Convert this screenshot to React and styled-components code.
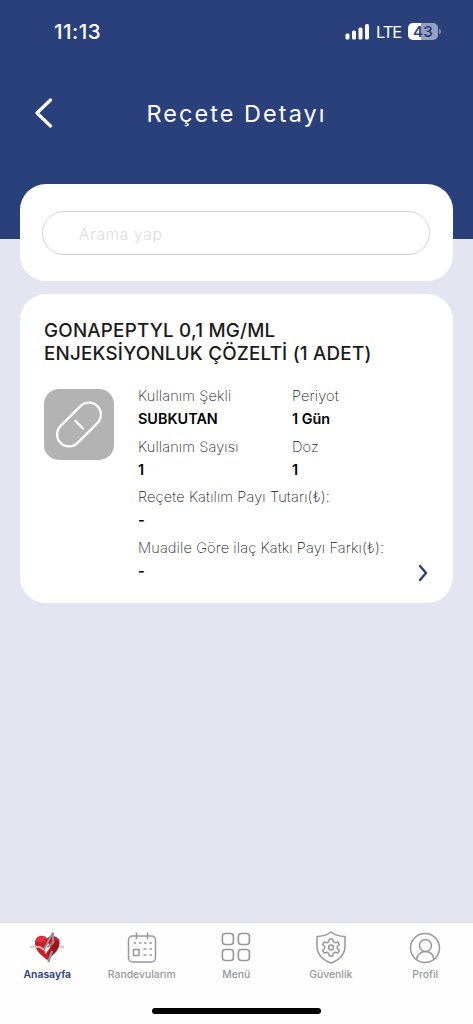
import styled, { createGlobalStyle } from "styled-components"

const colors = {
    primary: '#2a407a',
    background: '#e3e6f0',
    card: '#ffffff',
    muted: '#96979f',
    border: '#d3d3d5',
}

const GlobalStyle = createGlobalStyle`
    * {
        box-sizing: border-box;
    }

    body {
        margin: 0;
        font-family: Inter, "Liberation Sans", sans-serif;
        background: ${colors.background};
    }
`

const Screen = styled.div`
    display: flex;
    flex-direction: column;
    width: 473px;
    height: 1024px;
    background: ${colors.background};
    overflow: hidden;
`

const Header = styled.header`
    flex: none;
    height: 239px;
    background: ${colors.primary};
    color: #fff;
`

const StatusBar = styled.div`
    display: flex;
    align-items: center;
    justify-content: space-between;
    height: 63px;
    padding: 0 32px 0 54px;
`

const Clock = styled.span`
    font-size: 20.5px;
    font-weight: 500;
    letter-spacing: 0.5px;
`

const StatusIcons = styled.div`
    display: flex;
    align-items: center;
`

const Network = styled.span`
    margin: 1px 7px 0 7px;
    font-size: 16.5px;
    line-height: 18px;
    letter-spacing: -1.1px;
`

const Battery = styled.div`
    display: flex;
    align-items: center;
    justify-content: center;
    width: 30px;
    height: 17px;
    border-radius: 5px;
    background: linear-gradient(90deg, #fff 43%, #95a0c0 43%);
    color: ${colors.primary};
    font-size: 15px;
    font-weight: 600;
    letter-spacing: 0.2px;
`

const BatteryCap = styled.span`
    width: 2px;
    height: 5px;
    margin-left: 1px;
    border-radius: 0 2px 2px 0;
    background: #7c89ae;
`

const TitleBar = styled.div`
    display: grid;
    grid-template-columns: 71px 1fr 71px;
    align-items: center;
    height: 101px;
`

const BackButton = styled.button`
    display: flex;
    padding: 0 0 2px 34px;
    border: 0;
    background: none;
    color: inherit;
`

const Title = styled.h1`
    margin: 0;
    text-align: center;
    font-size: 23.4px;
    font-weight: 400;
    letter-spacing: 2.1px;
    white-space: nowrap;
`

const Content = styled.main`
    display: flex;
    flex: 1;
    flex-direction: column;
    gap: 13px;
    margin-top: -55px;
    padding: 0 20px;
`

const SearchCard = styled.section`
    height: 97px;
    padding: 27px 23px 0 22px;
    border-radius: 26px;
    background: ${colors.card};
`

const SearchInput = styled.input`
    width: 100%;
    height: 44px;
    padding: 2px 36px 0;
    border: 1px solid ${colors.border};
    border-radius: 22px;
    outline: none;
    background: none;
    font-family: inherit;
    font-size: 15.5px;
    font-weight: 300;
    letter-spacing: 0.7px;

    &::placeholder {
        color: #dcdcde;
    }
`

const DrugCard = styled.section`
    display: flex;
    flex-direction: column;
    height: 309px;
    padding: 25px 24px 0;
    border-radius: 26px;
    background: ${colors.card};
`

const DrugName = styled.h2`
    margin: 0;
    color: #1b1b1b;
    font-size: 18.8px;
    font-weight: 500;
    line-height: 23px;
    letter-spacing: 0.22px;
    white-space: nowrap;
`

const DrugBody = styled.div`
    display: flex;
    margin-top: 18px;
`

const PillBox = styled.div`
    flex: none;
    width: 70px;
    height: 71px;
    margin: 6px 24px 0 0;
    border-radius: 15px;
    background: #b3b3b3;
`

const Fields = styled.dl`
    display: grid;
    grid-template-columns: 154px 1fr;
    flex: 1;
    margin: 0;
`

const Field = styled.div`
    grid-column: ${({ $wide }) => ($wide ? '1 / -1' : 'auto')};
    height: 50.6px;
    white-space: nowrap;
`

const FieldLabel = styled.dt`
    padding-top: 1px;
    color: #222;
    font-size: 14.6px;
    font-weight: 200;
    line-height: 24px;
    letter-spacing: 0.12px;
`

const FieldValue = styled.dd`
    margin: -1px 0 0;
    color: #000;
    font-size: 14.4px;
    font-weight: 600;
    line-height: 24px;
`

const DetailArrow = styled.svg`
    align-self: flex-end;
    margin: -21px 1px 0 0;
`

const TabBar = styled.nav`
    display: grid;
    grid-template-columns: repeat(5, 94.5px);
    flex: none;
    height: 86px;
    padding-top: 8px;
    border-top: 1px solid #dddfe5;
    background: #fefefe;
`

const Tab = styled.a`
    display: flex;
    flex-direction: column;
    align-items: center;
    color: ${({ $active }) => ($active ? colors.primary : colors.muted)};
    font-size: 10.4px;
    font-weight: ${({ $active }) => ($active ? 600 : 500)};
    line-height: 14px;

    svg {
        margin-bottom: 3px;
    }
`

const HomeArea = styled.div`
    display: flex;
    flex: none;
    justify-content: center;
    height: 16px;
    background: #fefefe;
`

const HomeIndicator = styled.div`
    width: 169px;
    height: 6px;
    border-radius: 3px;
    background: #000;
`

const fields = [
    { label: 'Kullanım Şekli', value: 'SUBKUTAN' },
    { label: 'Periyot', value: '1 Gün' },
    { label: 'Kullanım Sayısı', value: '1' },
    { label: 'Doz', value: '1' },
    { label: 'Reçete Katılım Payı Tutarı(₺):', value: '-', wide: true },
    { label: 'Muadile Göre ilaç Katkı Payı Farkı(₺):', value: '-', wide: true },
]

function HeartIcon() {
    return (
        <svg width="34" height="34" viewBox="0 0 34 34" fill="none">
            <path d="M17 29C12 24.500 5 20 5 12.500C5 4 14 3 17 7.500C20 3.500 29.500 4 29.500 12.500C29.500 19.500 22 25 17 29Z" fill="#c91d27" />
            <path d="M24 12L29 8C31 15 25 22 18 28.500V22Z" fill="#a5121c" />
            <path d="M5.500 10C8 4 14 4 16.500 7.500L12 12Z" fill="#e0323a" />
            <path d="M14 18L18 12L20.500 16L15.500 23Z" fill="#f4efec" />
            <path d="M5 14.500L6.500 16H10L13 18.500L15 17" stroke="#e8d9c8" strokeWidth="1.600" />
            <path d="M0 16H3L4.500 15L6 16M29.500 15L31 16H34" stroke="#9a9c9f" />
            <path d="M14 18.500L22.500 2" stroke="#909396" strokeWidth="1.800" />
            <path d="M23 1.500V12L17.500 16" stroke="#909396" strokeWidth="2" />
            <path d="M18.300 31L22 20" stroke="#909396" strokeWidth="2.400" />
        </svg>
    )
}

function CalendarIcon() {
    return (
        <svg width="34" height="34" viewBox="0 0 34 34" fill="none" stroke="currentColor" strokeWidth="1.5">
            <rect x="3.500" y="5" width="27" height="26" rx="4" />
            <path d="M11.500 1.500V8M22.500 1.500V8" />
            <path d="M8.500 12H11M14 12H16.500M19 12H21.500M24.500 12H27M18.500 18H21.500M24.500 18H27M18.500 24H21.500M24.500 24H27" />
            <rect x="8.500" y="18.500" width="5.500" height="6" />
        </svg>
    )
}

function MenuIcon() {
    return (
        <svg width="34" height="34" viewBox="0 0 34 34" fill="none" stroke="currentColor" strokeWidth="1.6">
            <rect x="3.400" y="2.500" width="11" height="11" rx="3" />
            <rect x="19.400" y="2.500" width="11" height="11" rx="3" />
            <rect x="3.400" y="18.500" width="11" height="11" rx="3" />
            <rect x="19.400" y="18.500" width="11" height="11" rx="3" />
        </svg>
    )
}

function ShieldIcon() {
    return (
        <svg width="34" height="34" viewBox="0 0 34 34" fill="none" stroke="currentColor" strokeWidth="1.500" strokeLinejoin="round">
            <path d="M17 1C13 4 8 5.500 3 5.500V15C3 23 9 29 17 32C25 29 31 23 31 15V5.500C26 5.500 21 4 17 1Z" />
            <g transform="translate(17 16.500)">
                <path d="M-1.600 -8.500H1.600L2.200 -5.800L4.200 -4.700L6.700 -5.600L8.300 -2.800L6.300 -1V1L8.300 2.800L6.700 5.600L4.200 4.700L2.200 5.800L1.600 8.500H-1.600L-2.200 5.800L-4.200 4.700L-6.700 5.600L-8.300 2.800L-6.300 1V-1L-8.300 -2.800L-6.700 -5.600L-4.200 -4.700L-2.200 -5.800Z" />
                <circle r="2.400" />
            </g>
        </svg>
    )
}

function ProfileIcon() {
    return (
        <svg width="34" height="34" viewBox="0 0 34 34" fill="none" stroke="currentColor" strokeWidth="1.500">
            <circle cx="17" cy="17" r="14.500" />
            <circle cx="17.500" cy="14.500" r="6" />
            <path d="M8.500 28.500C9.500 23.500 13 20.500 17.500 20.500C22 20.500 25 23.500 26 28" />
        </svg>
    )
}

const tabs = [
    { label: 'Anasayfa', Icon: HeartIcon, active: true },
    { label: 'Randevularım', Icon: CalendarIcon },
    { label: 'Menü', Icon: MenuIcon },
    { label: 'Güvenlik', Icon: ShieldIcon },
    { label: 'Profil', Icon: ProfileIcon },
]

function App() {
    return (
        <Screen>
            <GlobalStyle />
            <Header>
                <StatusBar>
                    <Clock>11:13</Clock>
                    <StatusIcons>
                        <svg width="24" height="16" viewBox="0 0 24 16" fill="#fff">
                            <rect x="0.500" y="9.500" width="4" height="6" rx="1.500" />
                            <rect x="7" y="6.500" width="4" height="9" rx="1.500" />
                            <rect x="13.500" y="3.500" width="4" height="12" rx="1.500" />
                            <rect x="20" y="0" width="4" height="15.500" rx="1.500" />
                        </svg>
                        <Network>LTE</Network>
                        <Battery>43</Battery>
                        <BatteryCap />
                    </StatusIcons>
                </StatusBar>
                <TitleBar>
                    <BackButton aria-label="Geri">
                        <svg width="20" height="30" viewBox="0 0 20 30" fill="none" stroke="#fff" strokeWidth="3.2" strokeLinecap="round" strokeLinejoin="round">
                            <path d="M16.500 2L3 15L16.500 28" />
                        </svg>
                    </BackButton>
                    <Title>Reçete Detayı</Title>
                </TitleBar>
            </Header>
            <Content>
                <SearchCard>
                    <SearchInput placeholder="Arama yap" />
                </SearchCard>
                <DrugCard>
                    <DrugName>
                        GONAPEPTYL 0,1 MG/ML<br />
                        ENJEKSİYONLUK ÇÖZELTİ (1 ADET)
                    </DrugName>
                    <DrugBody>
                        <PillBox>
                            <svg width="70" height="71" viewBox="0 0 70 71" fill="none" stroke="#fff" strokeWidth="2.3" strokeLinecap="round">
                                <rect x="9" y="23.500" width="52" height="24" rx="12" transform="rotate(-45 35 35.500)" />
                                <path d="M31.500 32L39 39.500" />
                            </svg>
                        </PillBox>
                        <Fields>
                            {fields.map(({ label, value, wide }) => (
                                <Field key={label} $wide={wide}>
                                    <FieldLabel>{label}</FieldLabel>
                                    <FieldValue>{value}</FieldValue>
                                </Field>
                            ))}
                        </Fields>
                    </DrugBody>
                    <DetailArrow width="10" height="18" viewBox="0 0 10 18" fill="none" stroke={colors.primary} strokeWidth="2.4" strokeLinecap="round">
                        <path d="M2 2L8 9L2 16" />
                    </DetailArrow>
                </DrugCard>
            </Content>
            <TabBar>
                {tabs.map(({ label, Icon, active }) => (
                    <Tab key={label} $active={active}>
                        <Icon />
                        {label}
                    </Tab>
                ))}
            </TabBar>
            <HomeArea>
                <HomeIndicator />
            </HomeArea>
        </Screen>
    )
}

export default App
